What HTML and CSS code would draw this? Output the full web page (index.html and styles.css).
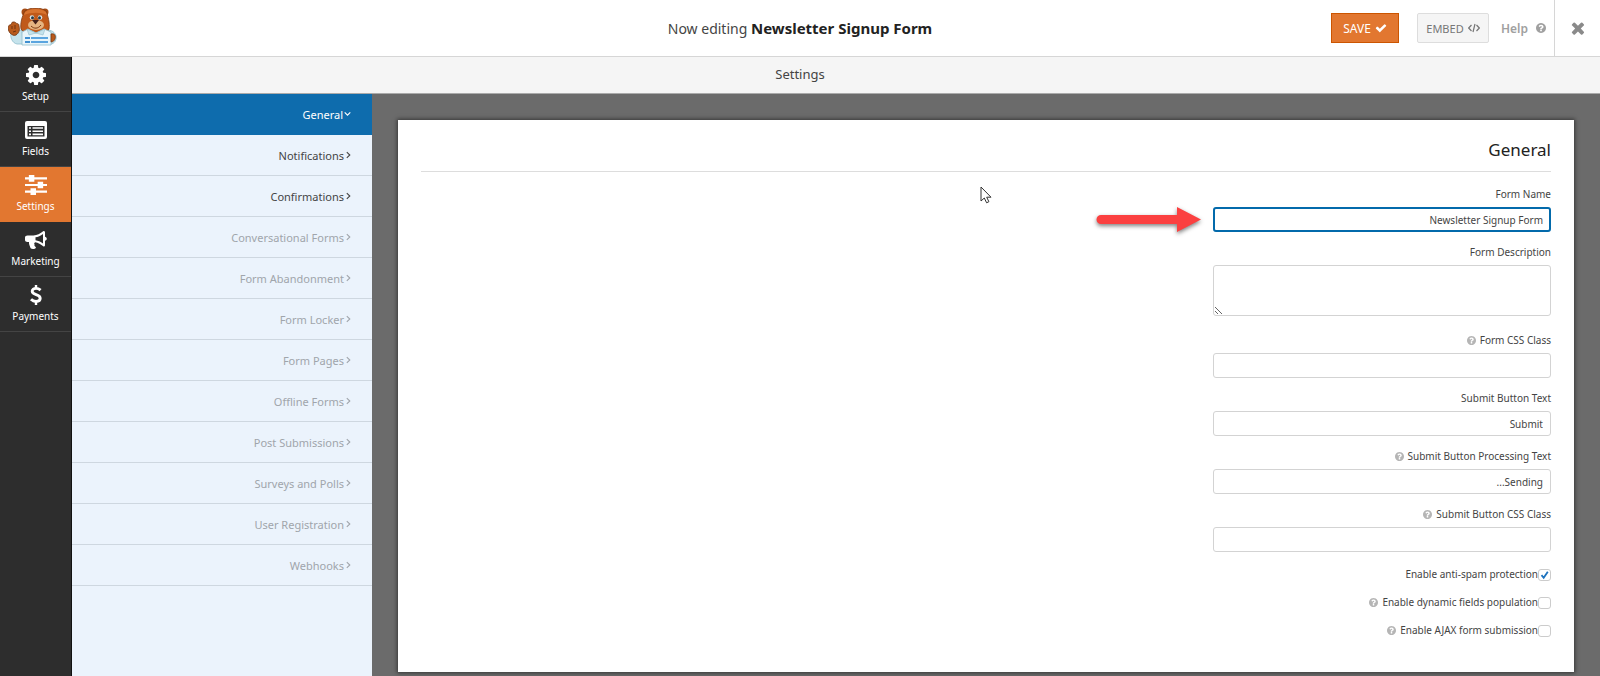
FILE: index.html
```html
<!DOCTYPE html>
<html lang="en">
<head>
<meta charset="utf-8">
<title>Form Builder - Settings</title>
<link rel="stylesheet" href="styles.css">
</head>
<body>
<svg class="defs" aria-hidden="true">
  <symbol id="i-help" viewBox="128 128 1536 1536"><path d="M1024 1376v-192q0-14-9-23t-23-9h-192q-14 0-23 9t-9 23v192q0 14 9 23t23 9h192q14 0 23-9t9-23zm256-672q0-88-55.500-163t-138.500-116-170-41q-243 0-371 213-15 24 8 42l132 100q7 6 19 6 16 0 25-12 53-68 86-92 34-24 86-24 48 0 85.500 26t37.500 59q0 38-20 61t-68 45q-63 28-115.500 86.500t-52.500 125.500v36q0 14 9 23t23 9h192q14 0 23-9t9-23q0-19 21.500-49.500t54.500-49.500q32-18 49-28.500t46-35 44.500-48 28-60.500 12.500-81zm384 192q0 209-103 385.500t-279.500 279.500-385.500 103-385.500-103-279.500-279.500-103-385.500 103-385.500 279.500-279.500 385.500-103 385.500 103 279.500 279.500 103 385.500z"/></symbol>
  <symbol id="i-check" viewBox="0 0 1792 1792"><path d="M1671 566q0 40-28 68l-724 724-136 136q-28 28-68 28t-68-28l-136-136-362-362q-28-28-28-68t28-68l136-136q28-28 68-28t68 28l294 295 656-657q28-28 68-28t68 28l136 136q28 28 28 68z"/></symbol>
  <symbol id="i-right" viewBox="0 0 5 8"><path d="M.8 1.200L3.800 4 .8 6.800" fill="none" stroke="currentColor" stroke-width="1.100"/></symbol>
</svg>

<header class="header">
  <svg class="logo" viewBox="0 0 50 40" role="img" aria-label="WPForms">
    <path d="M14 22c-3 0-5 1-6 5l-5-2c-1 4 1 10 6 11h6z" fill="#c5e3ec" stroke="#8fbccb" stroke-width=".8"/>
    <path d="M39 22c6 0 10 4 9 9-1 4-4 6-9 5z" fill="#c5e3ec" stroke="#8fbccb" stroke-width=".8"/>
    <path d="M2 25c-3-4-2-8 0-8s1-3 3-3 2 0 3 1 3 0 3 3c1 4 0 7-3 9-2 1-4 0-6-2z" fill="#b85a1c" stroke="#6f3210" stroke-width=".8"/>
    <path d="M4 18v3M7 17v4M5 24l3-1" stroke="#6f3210" stroke-width="1"/>
    <circle cx="17" cy="4" r="3.500" fill="#a64c14"/><circle cx="37" cy="4" r="3.500" fill="#a64c14"/>
    <path d="M17 3c5-4 16-4 21 0 2 5 4 12 3 18-2 7-25 7-28 0-1-5 1-13 4-18z" fill="#c0591a" stroke="#7e3a12" stroke-width=".8"/>
    <path d="M17 4c5-4 16-4 21 0l1 3c-6-3-16-3-23 0z" fill="#d87430"/>
    <ellipse cx="28" cy="17" rx="8" ry="5" fill="#e5b481"/>
    <path d="M24 12h7l-3.500 4.500z" fill="#43201a"/>
    <circle cx="24" cy="9.500" r="2.300" fill="#d9e6ea"/><circle cx="32" cy="9.500" r="2.300" fill="#d9e6ea"/>
    <circle cx="24.500" cy="9.800" r="1.500" fill="#243b48"/><circle cx="31.500" cy="9.800" r="1.500" fill="#243b48"/>
    <path d="M23 18c3 3 7 3 10-1" fill="none" stroke="#7e3a12" stroke-width="1"/>
    <path d="M14 24l6-3 8 4 8-4 7 3v13H14z" fill="#e8f5fa" stroke="#8fbccb" stroke-width=".8"/>
    <path d="M19 21l2 6 7-2 7 2 2-6-9 4z" fill="#c5e3ec" stroke="#8fbccb" stroke-width=".6"/>
    <path d="M17 30h5M17 34h5" stroke="#3f8fd0" stroke-width="2.200"/><path d="M23 30h17M23 34h17" stroke="#5ba5df" stroke-width="2.200"/>
    <path d="M43 26c4-1 5 2 4 5-1 2-2 3-4 3z" fill="#b85a1c" stroke="#6f3210" stroke-width=".7"/>
  </svg>
  <div class="editing">Now editing <strong>Newsletter Signup Form</strong></div>
  <div class="actions">
    <button class="btn save" type="button">SAVE <svg class="ic12" fill="currentColor"><use href="#i-check"/></svg></button>
    <button class="btn embed" type="button">EMBED <svg class="ic12" viewBox="0 0 12 12" fill="none" stroke="currentColor" stroke-width="1.200"><path d="M3.500 3L.7 6l2.800 3M8.500 3l2.800 3-2.800 3M7 2L5 10"/></svg></button>
    <a class="help" href="#">Help <svg class="ic10" fill="currentColor"><use href="#i-help"/></svg></a>
    <button class="close" type="button" aria-label="Close"><svg viewBox="300 220 1200 1360" fill="currentColor"><path d="M1490 1322q0 40-28 68l-136 136q-28 28-68 28t-68-28l-294-294-294 294q-28 28-68 28t-68-28l-136-136q-28-28-28-68t28-68l294-294-294-294q-28-28-28-68t28-68l136-136q28-28 68-28t68 28l294 294 294-294q28-28 68-28t68 28l136 136q28 28 28 68t-28 68l-294 294 294 294q28 28 28 68z"/></svg></button>
  </div>
</header>

<div class="body">
  <nav class="rail">
    <button type="button" class="rail-item"><svg viewBox="128 128 1536 1536" fill="currentColor"><path d="M1152 896q0-106-75-181t-181-75-181 75-75 181 75 181 181 75 181-75 75-181zm512-109v222q0 12-8 23t-20 13l-185 28q-19 54-39 91 35 50 107 138 10 12 10 25t-9 23q-27 37-99 108t-94 71q-12 0-26-9l-138-108q-44 23-91 38-16 136-29 186-7 28-36 28h-222q-14 0-24.500-8.500t-11.500-21.500l-28-184q-49-16-90-37l-141 107q-10 9-25 9-14 0-25-11-126-114-165-168-7-10-7-23 0-12 8-23 15-21 51-66.500t54-70.500q-27-50-41-99l-183-27q-13-2-21-12.500t-8-23.500v-222q0-12 8-23t19-13l186-28q14-46 39-92-40-57-107-138-10-12-10-24 0-10 9-23 26-36 98.500-107.500t94.500-71.500q13 0 26 10l138 107q44-23 91-38 16-136 29-186 7-28 36-28h222q14 0 24.500 8.500t11.500 21.500l28 184q49 16 90 37l142-107q9-9 24-9 13 0 25 10 129 119 165 170 7 8 7 22 0 12-8 23-15 21-51 66.500t-54 70.500q26 50 41 98l183 28q13 2 21 12.500t8 23.500z"/></svg>Setup</button>
    <button type="button" class="rail-item"><svg viewBox="0 0 22 18"><rect width="22" height="18" rx="2" fill="currentColor"/><path d="M2.500 5h17v10.500h-17z" fill="#2d2d2d"/><path d="M4 7h2M7.500 7H18M4 10.200h2M7.500 10.200H18M4 13.400h2M7.500 13.400H18" stroke="currentColor" stroke-width="1.600"/></svg>Fields</button>
    <button type="button" class="rail-item active"><svg viewBox="0 0 20 18"><path d="M0 3h20M0 9h20M0 15h20" stroke="currentColor" stroke-width="2"/><path d="M3.500 0h5v6h-5zM11.500 6h5v6h-5zM5 12h5v6H5z" fill="currentColor"/></svg>Settings</button>
    <button type="button" class="rail-item"><svg viewBox="0 0 22 18"><path fill="currentColor" fill-rule="evenodd" d="M18.500 0C19.500 0 20 .6 20 1.300v4.400c1 .2 1.800 1 1.800 2s-.8 1.800-1.800 2v4.600c0 .8-.6 1.300-1.500 1.300-2.700-2.300-5.400-3.900-8.300-4.300-1 .4-1.300 1.500-.6 2.300-.6 1 .2 1.900 1.400 2.800-.7 1.800-4 2.100-5.400.8C4.800 14.800 3.700 13 4 11H2.500C1 11 0 10 0 9V6.500c0-1.200 1-2.100 2.500-2.100h6C12 4.400 15.200 2.800 18.500 0zM18 2.900c-2.500 1.900-5 3-7.500 3.300v3c2.500.3 5 1.400 7.500 3.300z"/></svg>Marketing</button>
    <button type="button" class="rail-item"><svg viewBox="0 0 12 20" fill="none" stroke="currentColor" stroke-width="2.900"><path d="M10.600 5.200C9 3.800 7.600 3.400 6 3.400c-2.200 0-3.800 1-3.800 2.900 0 4.200 8 2.500 8 7 0 2.100-1.800 3.200-4.100 3.200-2 0-3.700-.8-5.100-2.200"/><path d="M6 0v4M6 16v4" stroke-width="2.400"/></svg>Payments</button>
  </nav>

  <div class="main">
    <div class="subhead"><span>Settings</span></div>
    <div class="work">
      <nav class="sections">
        <a href="#" class="current">General<svg class="down" viewBox="0 0 8 8"><path d="M.8 2.200L4 5.400l3.200-3.200" fill="none" stroke="currentColor" stroke-width="1.300"/></svg></a>
        <a href="#">Notifications<svg><use href="#i-right"/></svg></a>
        <a href="#">Confirmations<svg><use href="#i-right"/></svg></a>
        <a href="#" class="off">Conversational Forms<svg><use href="#i-right"/></svg></a>
        <a href="#" class="off">Form Abandonment<svg><use href="#i-right"/></svg></a>
        <a href="#" class="off">Form Locker<svg><use href="#i-right"/></svg></a>
        <a href="#" class="off">Form Pages<svg><use href="#i-right"/></svg></a>
        <a href="#" class="off">Offline Forms<svg><use href="#i-right"/></svg></a>
        <a href="#" class="off">Post Submissions<svg><use href="#i-right"/></svg></a>
        <a href="#" class="off">Surveys and Polls<svg><use href="#i-right"/></svg></a>
        <a href="#" class="off">User Registration<svg><use href="#i-right"/></svg></a>
        <a href="#" class="off">Webhooks<svg><use href="#i-right"/></svg></a>
      </nav>

      <main class="canvas">
        <form class="panel">
          <h1>General</h1>
          <svg class="pointer" viewBox="0 0 12 18" aria-hidden="true"><path d="M1 1v14l3.300-3 2.300 4.800 2.300-1.100-2.200-4.500H11z" fill="#fff" stroke="#333" stroke-width="1"/></svg>
          <div class="fields">
            <div class="field">
              <label for="name">Form Name</label>
              <div class="marked">
                <svg class="arrow" viewBox="0 0 112 36" aria-hidden="true"><path d="M8 10h76V2l24 12.500L84 27v-8H8a4.500 4.500 0 0 1 0-9z" fill="#fb4040"/></svg>
                <input id="name" class="focus" type="text" value="Newsletter Signup Form">
              </div>
            </div>
            <div class="field tall">
              <label for="desc">Form Description</label>
              <textarea id="desc"></textarea>
            </div>
            <div class="field">
              <label for="css"><svg class="q"><use href="#i-help"/></svg>Form CSS Class</label>
              <input id="css" type="text">
            </div>
            <div class="field">
              <label for="submit">Submit Button Text</label>
              <input id="submit" type="text" value="Submit">
            </div>
            <div class="field">
              <label for="proc"><svg class="q"><use href="#i-help"/></svg>Submit Button Processing Text</label>
              <input id="proc" type="text" value="...Sending">
            </div>
            <div class="field">
              <label for="bcss"><svg class="q"><use href="#i-help"/></svg>Submit Button CSS Class</label>
              <input id="bcss" type="text">
            </div>
            <div class="checks">
              <div class="check"><label for="c1">Enable anti-spam protection</label><input id="c1" type="checkbox" checked></div>
              <div class="check"><label for="c2"><svg class="q"><use href="#i-help"/></svg>Enable dynamic fields population</label><input id="c2" type="checkbox"></div>
              <div class="check"><label for="c3"><svg class="q"><use href="#i-help"/></svg>Enable AJAX form submission</label><input id="c3" type="checkbox"></div>
            </div>
          </div>
        </form>
      </main>
    </div>
  </div>
</div>
</body>
</html>
```
FILE: styles.css
```css
* { box-sizing: border-box; }
body {
  margin: 0;
  min-height: 100vh;
  display: flex;
  flex-direction: column;
  font-family: Tahoma, "Noto Sans", "Open Sans", sans-serif;
  font-size: 12px;
  color: #444;
  background: #fff;
}
button, input, textarea { font-family: inherit; }
a { text-decoration: none; color: inherit; }
.defs { position: absolute; width: 0; height: 0; }

.header {
  display: grid;
  grid-template-columns: 1fr auto 1fr;
  align-items: center;
  height: 57px;
  border-bottom: 1px solid #d6d6d6;
}
.logo { width: 50px; height: 40px; margin-left: 8px; }
.editing { font-size: 14px; color: #444; }
.editing strong { font-size: 15px; color: #222; font-weight: 700; }
.actions { display: flex; align-items: center; justify-content: flex-end; height: 100%; }
.btn {
  display: flex;
  align-items: center;
  justify-content: center;
  gap: 4px;
  height: 30px;
  padding: 0 6px;
  white-space: nowrap;
}
.save { min-width: 68px; margin-right: 18px; background: #e27730; border: 1px solid #cc5500; color: #fff; font-size: 12px; }
.embed { min-width: 72px; margin-right: 12px; background: #f5f5f5; border: 1px solid #ddd; border-radius: 2px; color: #777; font-size: 11px; }
.ic12 { width: 12px; height: 12px; flex: none; }
.ic10 { width: 10px; height: 10px; flex: none; }
.help { display: flex; align-items: center; gap: 8px; margin-right: 8px; font-weight: 600; color: #a0a0a0; }
.close {
  display: flex;
  align-items: center;
  justify-content: center;
  width: 46px;
  height: 100%;
  padding: 0;
  border: 0;
  border-left: 1px solid #d6d6d6;
  background: none;
  color: #8a8a8a;
}
.close svg { width: 14px; height: 14px; }

.body { flex: 1; display: flex; }
.rail { width: 72px; flex: none; background: #2d2d2d; border-right: 1px solid #111; }
.rail-item {
  display: flex;
  flex-direction: column;
  align-items: center;
  width: 100%;
  height: 55px;
  padding: 8px 0 0;
  gap: 3px;
  border: 0;
  border-bottom: 1px solid #444;
  background: none;
  color: #fff;
  font-size: 10px;
  line-height: 16px;
}
.rail-item svg { height: 20px; width: 22px; overflow: visible; }
.rail-item.active { background: #e27730; border-color: #e27730; }

.main { flex: 1; min-width: 0; display: flex; flex-direction: column; }
.subhead {
  display: flex;
  justify-content: center;
  align-items: center;
  height: 37px;
  padding-bottom: 3px;
  background: #f5f5f5;
  border-bottom: 1px solid #aaa;
  font-size: 13px;
}
.subhead span { margin-right: 72px; }
.work { flex: 1; display: flex; }
.sections { width: 300px; flex: none; background: #ebf3fc; }
.sections a {
  display: flex;
  align-items: center;
  justify-content: flex-end;
  gap: 2px;
  height: 41px;
  padding-right: 21px;
  border-bottom: 1px solid #ced7e0;
  font-size: 11px;
}
.sections svg { width: 5px; height: 8px; }
.sections svg.down { width: 7px; }
.sections .current { gap: 1px; background: #0e6cad; border-color: #0e6cad; color: #fff; }
.sections .off { color: #a0a5ab; }

.canvas { flex: 1; padding: 26px 26px 4px; background: #6b6b6b; }
.panel {
  position: relative;
  min-height: 100%;
  padding: 18px 23px 28px;
  background: #fff;
  box-shadow: 0 0 4px 1px rgba(0, 0, 0, .5);
}
h1 {
  margin: 0 0 14px;
  padding-bottom: 9px;
  border-bottom: 1px solid #ddd;
  font-size: 17px;
  font-weight: 400;
  line-height: 24px;
  text-align: right;
  color: #222;
}
.fields { display: flex; flex-direction: column; gap: 12px; width: 338px; margin-left: auto; font-size: 10px; }
.field { display: flex; flex-direction: column; gap: 4px; }
.field.tall { margin-bottom: 4px; }
.field label { display: flex; justify-content: flex-end; align-items: center; gap: 4px; line-height: 17px; }
.q { width: 9px; height: 9px; fill: #b5b5b5; }
input[type="text"], textarea {
  display: block;
  width: 100%;
  height: 25px;
  margin: 0;
  padding: 0 7px;
  border: 1px solid #d3d3d3;
  border-radius: 3px;
  background: #fff;
  color: #444;
  font-size: 10px;
  text-align: right;
}
textarea { height: 51px; direction: rtl; resize: vertical; }
input.focus { border: 2px solid #036aab; padding: 0 6px; }
.marked { position: relative; }
.arrow {
  position: absolute;
  right: calc(100% + 8px);
  top: -2px;
  width: 112px;
  height: 36px;
  filter: drop-shadow(0 2px 2px rgba(0, 0, 0, .5));
}
.pointer { position: absolute; left: 50%; top: 66px; width: 12px; height: 18px; margin-left: -6px; }
.checks { display: flex; flex-direction: column; gap: 11px; margin-top: 2px; }
.check { display: flex; justify-content: flex-end; align-items: center; line-height: 17px; }
.check label { display: flex; align-items: center; gap: 4px; }
input[type="checkbox"] {
  appearance: none;
  width: 13px;
  height: 12px;
  margin: 0;
  border: 1px solid #ccc;
  border-radius: 3px;
  background: #fff;
}
input[type="checkbox"]:checked {
  background: #fff url("data:image/svg+xml,%3Csvg xmlns='http://www.w3.org/2000/svg' viewBox='0 0 11 10'%3E%3Cpath d='M2.500 5.200l2.200 2.600L8.800 1.800' fill='none' stroke='%231e73be' stroke-width='1.800'/%3E%3C/svg%3E") center / contain no-repeat;
}
```
